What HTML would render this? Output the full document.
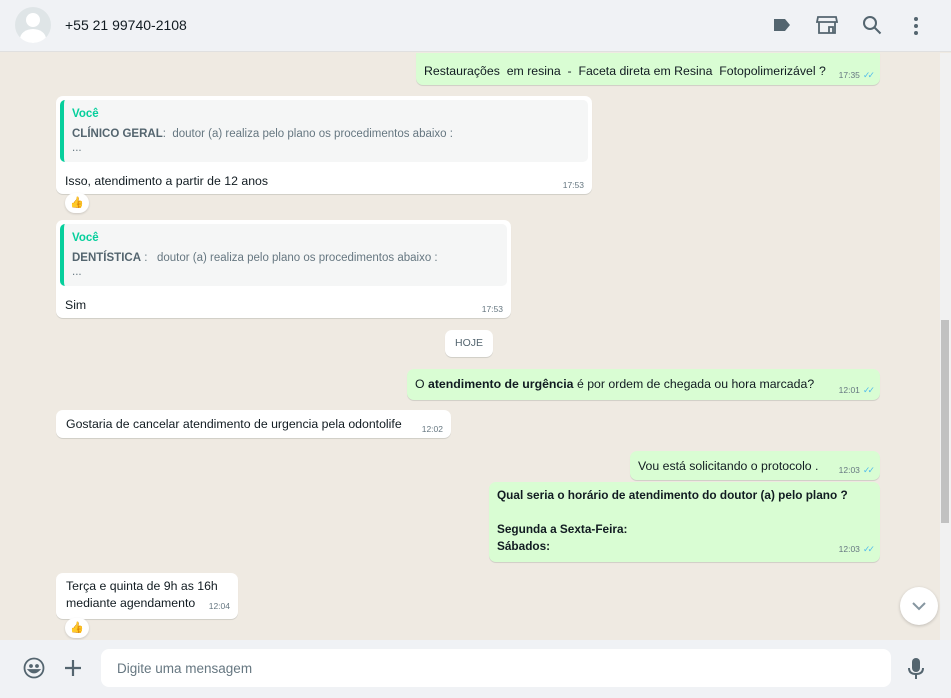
<!DOCTYPE html>
<html><head><meta charset="utf-8"><style>
*{box-sizing:border-box;margin:0;padding:0}
body{width:951px;height:698px;overflow:hidden;background:#efeae2;font-family:"Liberation Sans",sans-serif;font-size:12.3px;color:#111b21;position:relative;white-space:nowrap}
.hdr{position:absolute;left:0;top:0;width:951px;height:52px;background:#f0f2f5;border-bottom:1px solid #e0e0e0}
.av{position:absolute;left:15px;top:7px;width:36px;height:36px;border-radius:50%;background:#dfe5e7;overflow:hidden}
.av:before{content:"";position:absolute;left:11px;top:6px;width:14px;height:14px;border-radius:50%;background:#fff}
.av:after{content:"";position:absolute;left:5px;top:22px;width:26px;height:20px;border-radius:50%;background:#fff}
.name{position:absolute;left:65px;top:17px;font-size:14px;color:#111b21}
.b{position:absolute;border-radius:7px;box-shadow:0 1px .5px rgba(11,20,26,.13);background:#fff}
.o{background:#d9fdd3}
.t{position:absolute;font-size:8.5px;color:#667781;right:8px;bottom:4px}
.tk{color:#53bdeb;font-size:9px;margin-left:3px;letter-spacing:-3px}
.q{position:absolute;left:4px;right:4px;top:4px;background:#f5f6f6;border-radius:5px;border-left:4px solid #06cf9c;padding:4px 8px;font-size:11.5px;color:#667781;line-height:20px}
.q .v{color:#06cf9c;font-weight:bold;font-size:11.5px}
.rx{position:absolute;width:24px;height:20px;border-radius:10px;background:#fff;font-size:11px;text-align:center;line-height:20px;box-shadow:0 1px 2px rgba(0,0,0,.15)}
.ftr{position:absolute;left:0;top:640px;width:951px;height:58px;background:#f0f2f5}
.inp{position:absolute;left:101px;top:9px;width:790px;height:38px;background:#fff;border-radius:8px;padding:12px 16px;color:#667781;font-size:13.5px}
</style></head><body>
<div class="hdr"><div class="av"></div><div class="name">+55 21 99740-2108</div>
<svg style="position:absolute;left:773px;top:17px" width="18" height="16"><path d="M1 2h11l5 6-5 6H1z" fill="#54656f"/></svg>
<svg style="position:absolute;left:816px;top:15px" width="22" height="20" fill="none" stroke="#54656f" stroke-width="1.8"><path d="M2 2h18l1 5H1z M3 7v11h16V7 M13 18v-6h4v6"/></svg>
<svg style="position:absolute;left:862px;top:15px" width="20" height="20" fill="none" stroke="#54656f" stroke-width="2"><circle cx="8" cy="8" r="6"/><path d="M12.5 12.5l6 6"/></svg>
<svg style="position:absolute;left:912px;top:16px" width="8" height="20" fill="#54656f"><circle cx="4" cy="3" r="2"/><circle cx="4" cy="10" r="2"/><circle cx="4" cy="17" r="2"/></svg>
</div>
<div style="position:absolute;left:940px;top:53px;width:11px;height:587px;background:#f1f1f1"></div>
<div style="position:absolute;left:941px;top:320px;width:8px;height:203px;background:#c1c1c1"></div>

<div class="b o" style="left:416px;top:53px;width:464px;height:32px;border-radius:0 0 7px 7px"><div style="position:absolute;left:8px;top:11px">Restaurações&nbsp; em resina&nbsp; -&nbsp; Faceta direta em Resina&nbsp; Fotopolimerizável ?</div><div class="t">17:35<span class="tk">✓✓</span></div></div>

<div class="b" style="left:56px;top:96px;width:536px;height:98px"><div class="q" style="height:62px"><div class="v">Você</div><div><b style="color:#54656f">CLÍNICO GERAL</b>:&nbsp; doutor (a) realiza pelo plano os procedimentos abaixo :</div><div style="line-height:8px">...</div></div><div style="position:absolute;left:9px;top:78px">Isso, atendimento a partir de 12 anos</div><div class="t">17:53</div></div>
<div class="rx" style="left:65px;top:193px">👍</div>

<div class="b" style="left:56px;top:220px;width:455px;height:98px"><div class="q" style="height:62px"><div class="v">Você</div><div><b style="color:#54656f">DENTÍSTICA</b> :&nbsp;&nbsp; doutor (a) realiza pelo plano os procedimentos abaixo :</div><div style="line-height:8px">...</div></div><div style="position:absolute;left:9px;top:78px">Sim</div><div class="t">17:53</div></div>

<div class="b" style="left:445px;top:330px;width:48px;height:27px;font-size:10.5px;color:#54656f;text-align:center;line-height:27px">HOJE</div>

<div class="b o" style="left:407px;top:369px;width:473px;height:31px"><div style="position:absolute;left:8px;top:8px">O <b>atendimento de urgência</b> é por ordem de chegada ou hora marcada?</div><div class="t">12:01<span class="tk">✓✓</span></div></div>

<div class="b" style="left:56px;top:410px;width:395px;height:28px"><div style="position:absolute;left:10px;top:7px">Gostaria de cancelar atendimento de urgencia pela odontolife</div><div class="t">12:02</div></div>

<div class="b o" style="left:630px;top:451px;width:250px;height:29px"><div style="position:absolute;left:8px;top:8px">Vou está solicitando o protocolo .</div><div class="t">12:03<span class="tk">✓✓</span></div></div>

<div class="b o" style="left:489px;top:482px;width:391px;height:80px;font-weight:bold;line-height:17px;font-size:11.8px"><div style="position:absolute;left:8px;top:5px">Qual seria o horário de atendimento do doutor (a) pelo plano ?<br><br>Segunda a Sexta-Feira:<br>Sábados:</div><div class="t" style="font-weight:normal">12:03<span class="tk">✓✓</span></div></div>

<div class="b" style="left:56px;top:573px;width:182px;height:46px;line-height:17px"><div style="position:absolute;left:10px;top:5px">Terça e quinta de 9h as 16h<br>mediante agendamento</div><div class="t">12:04</div></div>
<div class="rx" style="left:65px;top:618px">👍</div>

<div style="position:absolute;left:900px;top:587px;width:38px;height:38px;border-radius:50%;background:#fff;box-shadow:0 1px 3px rgba(0,0,0,.2)"><svg width="38" height="38" fill="none" stroke="#8696a0" stroke-width="2"><path d="M13 16l6 6 6-6"/></svg></div>

<div class="ftr">
<svg style="position:absolute;left:23px;top:17px" width="22" height="22" fill="none" stroke="#54656f" stroke-width="1.8"><circle cx="11" cy="11" r="9.5"/><circle cx="8" cy="9" r="1" fill="#54656f"/><circle cx="14" cy="9" r="1" fill="#54656f"/><path d="M6 13q5 5 10 0z" fill="#54656f"/></svg>
<svg style="position:absolute;left:64px;top:19px" width="18" height="18" stroke="#54656f" stroke-width="2.2"><path d="M9 1v16M1 9h16"/></svg>
<div class="inp">Digite uma mensagem</div>
<svg style="position:absolute;left:907px;top:17px" width="18" height="24" fill="#54656f"><rect x="5" y="1" width="8" height="14" rx="4"/><path d="M2 11q0 6 7 6t7-6" fill="none" stroke="#54656f" stroke-width="2"/><rect x="8" y="17" width="2" height="5"/></svg>
</div>
</body></html>
